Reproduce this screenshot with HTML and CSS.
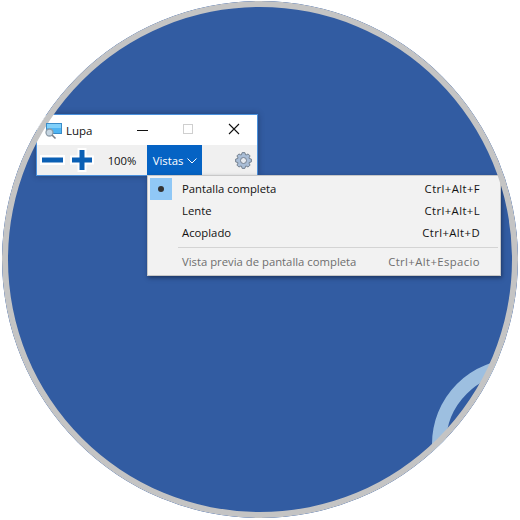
FILE: index.html
```html
<!DOCTYPE html>
<html lang="es">
<head>
<meta charset="utf-8">
<title>Lupa</title>
<link rel="stylesheet" href="styles.css">
</head>
<body>
<div class="disc">
  <div class="ring"></div>
  <div class="window">
    <div class="titlebar">
      <svg class="app-icon" width="18" height="18" viewBox="0 0 18 18">
        <rect x="2.500" y="0.500" width="15" height="10" fill="#4fb4f2" stroke="#3a8cc8"/>
        <rect x="3" y="1" width="14" height="4" fill="#80d0fa"/>
        <circle cx="5.500" cy="9.500" r="3.500" fill="#c6d6e2" stroke="#8d9ca8" stroke-width="1.300"/>
        <path d="M8 12l3.500 3.500" stroke="#7c7f88" stroke-width="1.600"/>
      </svg>
      <span class="title">Lupa</span>
      <div class="controls">
        <svg class="ctl" width="46" height="30" viewBox="0 0 46 30"><path d="M18 15.500h11" stroke="#111" stroke-width="1"/></svg>
        <svg class="ctl" width="46" height="30" viewBox="0 0 46 30"><rect x="18.500" y="9.500" width="9" height="9" fill="none" stroke="#cfcfcf"/></svg>
        <svg class="ctl" width="46" height="30" viewBox="0 0 46 30"><path d="M18 9l10 10M28 9l-10 10" stroke="#111" stroke-width="1.100"/></svg>
      </div>
    </div>
    <div class="toolbar">
      <svg class="zoom-btn" width="30" height="30" viewBox="0 0 30 30"><path d="M3 15h25" stroke="#fff" stroke-width="10"/><path d="M5 15h21" stroke="#0a5fb4" stroke-width="5"/></svg>
      <svg class="zoom-btn" width="30" height="30" viewBox="0 0 30 30"><path d="M3 15h24M15 3v24" stroke="#fff" stroke-width="9"/><path d="M5 15h20M15 5v20" stroke="#0a5fb4" stroke-width="5"/></svg>
      <span class="percent">100%</span>
      <div class="views"><span class="views-label">Vistas</span>
        <svg class="chev" width="10" height="6" viewBox="0 0 10 6"><path d="M0.500 0.500L5 5L9.500 0.500" fill="none" stroke="#fff"/></svg>
      </div>
      <svg class="gear" width="17" height="17" viewBox="0 0 17 17">
        <polygon points="14.14,6.45 16.38,7.11 16.38,9.89 14.14,10.55 13.94,11.04 15.05,13.09 13.09,15.05 11.04,13.94 10.55,14.14 9.89,16.38 7.11,16.38 6.45,14.14 5.96,13.94 3.91,15.05 1.95,13.09 3.06,11.04 2.86,10.55 0.62,9.89 0.62,7.11 2.86,6.45 3.06,5.96 1.95,3.91 3.91,1.95 5.96,3.06 6.45,2.86 7.11,0.62 9.89,0.62 10.55,2.86 11.04,3.06 13.09,1.95 15.05,3.91 13.94,5.96" fill="#a9bdd6" stroke="#74808f"/>
        <circle cx="8.500" cy="8.500" r="3" fill="#e6eaf0" stroke="#74808f"/>
      </svg>
    </div>
  </div>
  <div class="menu">
    <div class="item">
      <span class="check"><span class="dot"></span></span>
      <span class="label">Pantalla completa</span><span class="keys">Ctrl+Alt+F</span>
    </div>
    <div class="item">
      <span class="check"></span>
      <span class="label">Lente</span><span class="keys">Ctrl+Alt+L</span>
    </div>
    <div class="item">
      <span class="check"></span>
      <span class="label">Acoplado</span><span class="keys">Ctrl+Alt+D</span>
    </div>
    <div class="sep"></div>
    <div class="item disabled">
      <span class="check"></span>
      <span class="label">Vista previa de pantalla completa</span><span class="keys">Ctrl+Alt+Espacio</span>
    </div>
  </div>
</div>
</body>
</html>
```

FILE: styles.css
```css
html, body {
  margin: 0;
  padding: 0;
  background: #fff;
}
body {
  width: 520px;
  height: 520px;
  font-family: "Open Sans", "Noto Sans", sans-serif;
  font-size: 11.300px;
  color: #111;
  overflow: hidden;
}
.disc {
  position: relative;
  width: 516px;
  height: 517px;
  margin: 1px 0 0 2px;
  border-radius: 50%;
  background: #325ca2;
  overflow: hidden;
}
.disc::after {
  content: "";
  position: absolute;
  inset: 0;
  z-index: 2;
  box-sizing: border-box;
  border: 6px solid #c4c4c4;
  border-radius: 50%;
  pointer-events: none;
}
.ring {
  position: absolute;
  left: 430px;
  top: 358px;
  width: 170px;
  height: 170px;
  box-sizing: border-box;
  border: 14px solid #9dbfe0;
  border-radius: 50%;
}
.window {
  position: absolute;
  left: 34px;
  top: 113px;
  width: 222px;
  height: 62px;
  box-sizing: border-box;
  border: 1px solid #4a90dc;
  background: #fff;
  box-shadow: 0 0 6px rgba(20, 30, 60, .45);
}
.titlebar {
  display: flex;
  align-items: center;
  height: 30px;
  background: #fff;
}
.app-icon {
  position: relative;
  z-index: 3;
  margin-left: 7px;
  margin-top: 3px;
}
.title {
  margin-left: 4px;
  font-size: 11.500px;
}
.controls {
  display: flex;
  margin-left: auto;
}
.ctl {
  display: block;
}
.toolbar {
  display: flex;
  align-items: center;
  height: 30px;
  background: #f0f0f0;
}
.zoom-btn {
  display: block;
}
.percent {
  width: 50px;
  text-align: center;
}
.views {
  display: flex;
  align-items: center;
  justify-content: center;
  gap: 4px;
  width: 55px;
  height: 30px;
  padding-left: 1px;
  box-sizing: border-box;
  background: #0563c4;
  color: #fff;
}
.chev {
  margin-top: 1px;
}
.gear {
  margin-left: 33px;
}
.menu {
  position: absolute;
  left: 145px;
  top: 174px;
  width: 354px;
  height: 101px;
  box-sizing: border-box;
  border: 1px solid #c8c8c8;
  padding: 2px 0 0 2px;
  background: #f2f2f2;
  box-shadow: 1px 2px 4px rgba(10, 20, 40, .5);
}
.item {
  display: flex;
  align-items: center;
  height: 22px;
}
.check {
  display: flex;
  align-items: center;
  justify-content: center;
  width: 22px;
  height: 22px;
  margin-right: 10px;
}
.item:first-child .check {
  background: #90c8f6;
}
.dot {
  width: 6px;
  height: 6px;
  border-radius: 50%;
  background: #333;
}
.label {
  margin-top: -2px;
}
.keys {
  margin-top: -2px;
  margin-left: auto;
  margin-right: 20px;
  letter-spacing: .4px;
}
.sep {
  height: 1px;
  margin: 3px 2px 3px 28px;
  background: #d4d4d4;
}
.disabled {
  color: #6e6e6e;
}
```
